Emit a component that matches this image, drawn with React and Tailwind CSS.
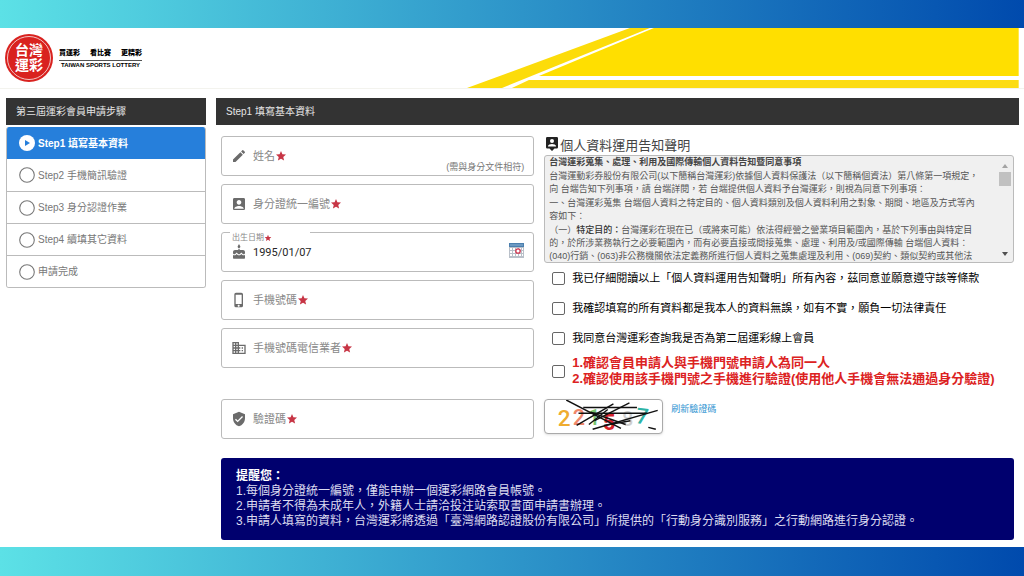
import { useState } from 'react';
import clsx from 'clsx';
import {
  MdAccountBox,
  MdBusiness,
  MdCake,
  MdEdit,
  MdPhoneIphone,
  MdStar,
  MdVerifiedUser,
} from 'react-icons/md';

const STEPS = ['Step1 填寫基本資料', 'Step2 手機簡訊驗證', 'Step3 身分認證作業', 'Step4 續填其它資料', '申請完成'];

function Logo() {
  return (
    <div className="flex items-center gap-1.5">
      <div className="flex size-12 items-center justify-center rounded-full bg-[#d9221f] p-0.5">
        <div className="flex size-full flex-col items-center justify-center rounded-full border border-[#f3c4c2] text-[14px] leading-[15px] font-bold text-white">
          <span>台灣</span>
          <span>運彩</span>
        </div>
      </div>
      <div className="flex flex-col items-center text-black">
        <p className="flex gap-2.5 border-b border-neutral-600 pb-px text-[7px] leading-[12px] font-black">
          <span>買運彩</span>
          <span>看比賽</span>
          <span>更精彩</span>
        </p>
        <p className="text-[6px] leading-[9px] font-bold">TAIWAN SPORTS LOTTERY</p>
      </div>
    </div>
  );
}

function HeaderArt() {
  return (
    <svg viewBox="0 0 558 60" preserveAspectRatio="none" className="h-[60px] w-[55%]" aria-hidden="true">
      <path fill="#fcdc0a" d="M6 60 L169 0 H189 L41 60 Z" />
      <path fill="#ffdf00" d="M78 48 L193 0 H558 V48 Z" />
      <path fill="#fcdc14" d="M68 52 H558 V60 H51 Z" />
    </svg>
  );
}

function StepMark({ active }) {
  return (
    <svg viewBox="0 0 16 16" className="size-4 shrink-0" aria-hidden="true">
      {active ? (
        <>
          <circle cx="8" cy="8" r="8" fill="#fff" />
          <path d="M6 5 L11 8 L6 11 Z" fill="#267fdb" />
        </>
      ) : (
        <circle cx="8" cy="8" r="7.3" fill="#fff" stroke="#777" strokeWidth="1.1" />
      )}
    </svg>
  );
}

function Sidebar() {
  return (
    <nav className="w-[200px] shrink-0">
      <h2 className="mb-[2px] bg-[#333] px-2.5 text-[10px] leading-[27px] text-neutral-200">第三屆運彩會員申請步驟</h2>
      <ol className="overflow-hidden rounded-[3px] border border-t-0 border-[#bbb] text-[10px] text-[#777]">
        {STEPS.map((step, i) => (
          <li
            key={step}
            className={clsx(
              'flex h-8 items-center gap-[3px] px-3',
              i === 0 ? 'bg-[#267fdb] font-bold text-white' : 'bg-white',
              i > 1 && 'border-t border-[#bbb]',
            )}
          >
            <StepMark active={i === 0} />
            {step}
          </li>
        ))}
      </ol>
    </nav>
  );
}

function Field({ id, icon: Icon, label, hint, className }) {
  return (
    <div className={clsx('flex h-10 items-center rounded-[3px] border border-[#bbb] bg-white px-[9px]', className)}>
      <Icon className="mr-1.5 size-4 shrink-0 text-[#6b6b6b]" />
      <label htmlFor={id} className="flex shrink-0 items-center text-[11px] text-[#888]">
        {label}
        <MdStar className="size-3 text-[#c73545]" />
      </label>
      <input id={id} required className="h-full w-0 min-w-0 flex-1 bg-transparent px-1 text-[11px] text-neutral-800 outline-none" />
      {hint && <span className="self-end text-[9px] leading-[15px] text-[#777]">{hint}</span>}
    </div>
  );
}

function CalendarIcon() {
  return (
    <svg viewBox="0 0 15 15" className="size-[15px]" aria-hidden="true">
      <rect x="0" y="0" width="15" height="15" fill="#b9c0c9" />
      <rect x="0" y="0" width="15" height="4" fill="#4b7fae" />
      <path d="M1 2 H14" stroke="#8fb4d4" strokeWidth="1" />
      <g fill="#fff">
        <path d="M1 5h2v2H1zM4 5h2v2H4zM7 5h2v2H7zM10 5h2v2h-2zM13 5h1v2h-1z" />
        <path d="M1 8h2v2H1zM4 8h2v2H4zM7 8h2v2H7zM10 8h2v2h-2zM13 8h1v2h-1z" />
        <path d="M1 11h2v2H1zM4 11h2v2H4zM7 11h2v2H7zM10 11h2v2h-2zM13 11h1v2h-1z" />
      </g>
      <circle cx="9" cy="8" r="2.2" fill="#fff" stroke="#d0354f" strokeWidth="1.3" />
    </svg>
  );
}

function BirthdayField() {
  const [date, setDate] = useState('1995/01/07');

  return (
    <div className="relative flex h-10 items-center rounded-[3px] border border-[#bbb] bg-white px-[9px]">
      {/* floating label, cuts a notch into the top border */}
      <label
        htmlFor="birthday"
        className="absolute -top-px left-2 flex w-20 items-center bg-white px-0.5 text-[8px] leading-[11px] text-[#888]"
      >
        出生日期
        <MdStar className="size-2 text-[#c73545]" />
      </label>
      <MdCake className="mr-1.5 size-4 shrink-0 text-[#6b6b6b]" />
      <input
        id="birthday"
        value={date}
        onChange={(e) => setDate(e.target.value)}
        className="h-full w-0 min-w-0 flex-1 bg-transparent font-[Roboto,sans-serif] text-[11px] text-neutral-800 outline-none"
      />
      <button type="button" aria-label="選擇日期" className="mb-1">
        <CalendarIcon />
      </button>
    </div>
  );
}

function Notice() {
  return (
    <section>
      <h3 className="flex items-center gap-0.5 pl-0.5 text-[13px] leading-[19px] text-[#444]">
        <svg viewBox="0 0 12 14" className="-mt-1 h-3.5 w-3" aria-hidden="true">
          <path d="M1.2 0 H10.8 Q12 0 12 1.2 V10.3 Q12 11.5 10.8 11.5 H8.5 L6 14 L3.5 11.5 H1.2 Q0 11.5 0 10.3 V1.2 Q0 0 1.2 0 Z" fill="#222" />
          <circle cx="6" cy="4" r="2" fill="#fff" />
          <path d="M2 9.6 V8.8 Q2.6 7 6 7 Q9.4 7 10 8.8 V9.6 Z" fill="#fff" />
        </svg>
        個人資料運用告知聲明
      </h3>
      <div className="flex h-[108px] justify-between overflow-hidden rounded-[3px] border border-[#bbb] bg-[#f0f0f0]">
        <div className="flex flex-col gap-px pl-1 text-[9px] leading-[13px] whitespace-nowrap text-[#555]">
          <p className="font-bold text-[#444]">台灣運彩蒐集、處理、利用及國際傳輸個人資料告知暨同意事項</p>
          <p>
            台灣運動彩券股份有限公司(以下簡稱台灣運彩)依據個人資料保護法（以下簡稱個資法）第八條第一項規定，
            <br />
            向 台端告知下列事項，請 台端詳閱，若 台端提供個人資料予台灣運彩，則視為同意下列事項：
          </p>
          <p>
            一、台灣運彩蒐集 台端個人資料之特定目的、個人資料類別及個人資料利用之對象、期間、地區及方式等內
            <br />
            容如下：
          </p>
          <p>
            （一）<b className="font-medium text-[#333]">特定目的：</b>
            台灣運彩在現在已（或將來可能）依法得經營之營業項目範圍內，基於下列事由與特定目
            <br />
            的，於所涉業務執行之必要範圍內，而有必要直接或間接蒐集、處理、利用及/或國際傳輸 台端個人資料：
            <br />
            (040)行銷、(063)非公務機關依法定義務所進行個人資料之蒐集處理及利用、(069)契約、類似契約或其他法
          </p>
        </div>
        <div className="flex w-4 shrink-0 flex-col items-center py-1">
          <svg viewBox="0 0 6 4" className="my-1 h-1 w-1.5" aria-hidden="true">
            <path d="M0 4 L3 0 L6 4 Z" fill="#a3a3a3" />
          </svg>
          <div className="h-3.5 w-3 bg-[#c1c1c1]" />
          <svg viewBox="0 0 6 4" className="mt-auto mb-0.5 h-1 w-1.5" aria-hidden="true">
            <path d="M0 0 L3 4 L6 0 Z" fill="#505050" />
          </svg>
        </div>
      </div>
    </section>
  );
}

function Consent({ children, className }) {
  return (
    <label className={clsx('flex items-center gap-[7px] pl-2', className)}>
      <input type="checkbox" className="size-[13px] shrink-0 appearance-none rounded-[2px] border border-[#666] bg-white checked:bg-[#267fdb]" />
      <span>{children}</span>
    </label>
  );
}

function Captcha() {
  return (
    <div className="flex items-start gap-2">
      <svg
        viewBox="0 0 119 35"
        role="img"
        aria-label="驗證碼圖片"
        className="h-[35px] w-[119px] rounded-[4px] border border-[#aaa] bg-white shadow-sm"
      >
        <g fontFamily="Roboto, sans-serif" fontWeight="500">
          <text x="11" y="28" fontSize="24" fill="#efac2f">2</text>
          <text x="27" y="27" fontSize="23" fill="#f0876a">2</text>
          <text x="43" y="26" fontSize="23" fill="#79c56e">1</text>
          <text x="59" y="32" fontSize="23" fontWeight="700" fill="#d6232a">5</text>
          <text x="79" y="28" fontSize="21" fill="#d0d0d0">8</text>
          <text x="94" y="25" fontSize="23" fill="#2fb3a6" transform="rotate(7 98 18)">7</text>
        </g>
        <g stroke="#111" strokeWidth="1.5" fill="none">
          <path d="M20 0 L78 30" />
          <path d="M38 8 H95" />
          <path d="M33 14 H106" />
          <path d="M31 27 L70 4" />
          <path d="M44 26 L64 10" />
          <path d="M50 22 L87 3" />
          <path d="M48 31 L117 11" />
          <path d="M46 13 L83 26" />
          <path d="M60 27 L88 22" />
          <path d="M107 29 L115 31" />
        </g>
      </svg>
      <a href="#captcha" className="pt-1 text-[9px] leading-[13px] text-[#2c93d1]">
        刷新驗證碼
      </a>
    </div>
  );
}

export default function App() {
  return (
    <div className="flex min-h-screen flex-col bg-white font-['Liberation_Sans','Noto_Sans_CJK_TC',sans-serif]">
      <div className="h-7 bg-linear-to-r/srgb from-[#5ce1e6] to-[#004aad]" />
      <header className="flex items-center justify-between border-b border-[#f3f3ee] px-[5px]">
        <Logo />
        <HeaderArt />
      </header>

      <main className="flex flex-1 items-start gap-2.5 pt-[9px] pr-[5px] pb-[7px] pl-1.5">
        <Sidebar />

        <form className="min-w-0 flex-1" onSubmit={(e) => e.preventDefault()}>
          <h1 className="bg-[#333] px-2.5 text-[10px] leading-[27px] text-neutral-200">Step1 填寫基本資料</h1>

          <div className="grid grid-cols-[2fr_3fr] gap-2.5 px-[5px] pt-[11px]">
            <div className="flex min-w-0 flex-col gap-2">
              <Field id="name" icon={MdEdit} label="姓名" hint="(需與身分文件相符)" />
              <Field id="idno" icon={MdAccountBox} label="身分證統一編號" />
              <BirthdayField />
              <Field id="mobile" icon={MdPhoneIphone} label="手機號碼" />
              <Field id="carrier" icon={MdBusiness} label="手機號碼電信業者" />
              <Field id="captcha" icon={MdVerifiedUser} label="驗證碼" className="mt-[23px]" />
            </div>

            <div className="min-w-0">
              <Notice />
              <div className="flex flex-col text-[11px] leading-[30px] whitespace-nowrap text-black">
                <Consent>我已仔細閱讀以上「個人資料運用告知聲明」所有內容，茲同意並願意遵守該等條款</Consent>
                <Consent>我確認填寫的所有資料都是我本人的資料無誤，如有不實，願負一切法律責任</Consent>
                <Consent>我同意台灣運彩查詢我是否為第二屆運彩線上會員</Consent>
                <Consent className="mt-0.5 mb-3 text-[13px] leading-4 font-bold text-[#dc2222]">
                  1.確認會員申請人與手機門號申請人為同一人
                  <br />
                  2.確認使用該手機門號之手機進行驗證(使用他人手機會無法通過身分驗證)
                </Consent>
              </div>
              <Captcha />
            </div>
          </div>

          <section className="mx-[5px] mt-[19px] rounded-[3px] bg-[#00006e] px-[15px] py-[11px] text-[12px] leading-[15px] text-[#dcdcf0]">
            <h2 className="font-bold text-white">提醒您：</h2>
            <ol>
              <li>1.每個身分證統一編號，僅能申辦一個運彩網路會員帳號。</li>
              <li>2.申請者不得為未成年人，外籍人士請洽投注站索取書面申請書辦理。</li>
              <li>3.申請人填寫的資料，台灣運彩將透過「臺灣網路認證股份有限公司」所提供的「行動身分識別服務」之行動網路進行身分認證。</li>
            </ol>
          </section>
        </form>
      </main>
      <div className="h-[29px] bg-linear-to-r/srgb from-[#5ce1e6] to-[#004aad]" />
    </div>
  );
}
